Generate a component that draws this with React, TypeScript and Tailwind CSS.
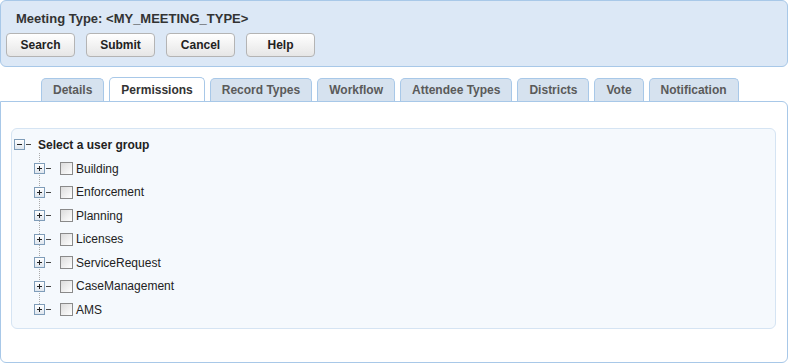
import React from 'react';

const tabs = ['Details', 'Permissions', 'Record Types', 'Workflow', 'Attendee Types', 'Districts', 'Vote', 'Notification'];
const groups = ['Building', 'Enforcement', 'Planning', 'Licenses', 'ServiceRequest', 'CaseManagement', 'AMS'];

function Toggle({ open }: { open?: boolean }) {
  return (
    <span className="relative inline-flex h-[11px] w-[11px] items-center justify-center border border-[#7f9db9] bg-gradient-to-b from-white to-[#dfe6ee]">
      <span className="absolute h-px w-[5px] bg-[#222]" />
      {!open && <span className="absolute h-[5px] w-px bg-[#222]" />}
    </span>
  );
}

function ActionButton({ label }: { label: string }) {
  return (
    <button className="h-[24px] w-[69px] rounded-[4px] border border-[#b4b4b4] bg-gradient-to-b from-white to-[#e6e6e6] text-[12px] font-bold text-[#222]">
      {label}
    </button>
  );
}

export default function App() {
  return (
    <div className="h-[364px] w-[789px] bg-white font-['Liberation_Sans',Arial,sans-serif]">
      <div className="h-[67px] w-[788px] rounded-[6px] border border-[#a8c8e8] bg-[#dce8f6] pl-[5px] pt-[10px]">
        <div className="pl-[10px] text-[13px] font-bold leading-[16px] text-[#333]">Meeting Type: &lt;MY_MEETING_TYPE&gt;</div>
        <div className="mt-[6px] flex gap-[11px]">
          {['Search', 'Submit', 'Cancel', 'Help'].map((b) => (
            <ActionButton key={b} label={b} />
          ))}
        </div>
      </div>

      <div className="mt-[11px] flex h-[23px] items-end gap-[5px] pl-[41px]">
        {tabs.map((t) => {
          const active = t === 'Permissions';
          return (
            <div
              key={t}
              className={
                active
                  ? 'relative z-10 flex h-[24px] items-center rounded-t-[5px] border border-b-0 border-[#a8c8e8] bg-white px-[11px] text-[12px] font-bold text-[#333]'
                  : 'flex h-[23px] items-center rounded-t-[5px] border border-b-0 border-[#a8c8e8] bg-[#d6e2ef] px-[11px] text-[12px] font-bold text-[#5a5a5a]'
              }
            >
              {t}
            </div>
          );
        })}
      </div>

      <div className="h-[262px] w-[788px] rounded-b-[6px] rounded-tr-[6px] border border-[#a8c8e8] bg-white px-[10px] pt-[26px]">
        <div className="h-[201px] w-[765px] rounded-[6px] border border-[#d5e4f3] bg-[#f5f9fd] pl-[2px] pt-[7px]">
          <div className="flex h-[17px] items-center">
            <Toggle open />
            <span className="ml-px h-px w-[5px] bg-[#444]" />
            <span className="ml-[7px] text-[12px] font-bold text-[#222]">Select a user group</span>
          </div>
          <div className="relative mt-[4px] pl-[20px]">
            <span className="absolute left-[25px] top-[-4px] h-[161px] border-l border-dotted border-[#aaa]" />
            {groups.map((g) => (
              <div key={g} className="relative flex h-[23.5px] items-center">
                <Toggle />
                <span className="ml-px h-px w-[5px] bg-[#444]" />
                <span className="ml-[9px] h-[13px] w-[13px] border border-[#8a8a8a] bg-gradient-to-br from-[#dcdcdc] to-white" />
                <span className="ml-[3px] text-[12px] text-[#222]">{g}</span>
              </div>
            ))}
          </div>
        </div>
      </div>
    </div>
  );
}
